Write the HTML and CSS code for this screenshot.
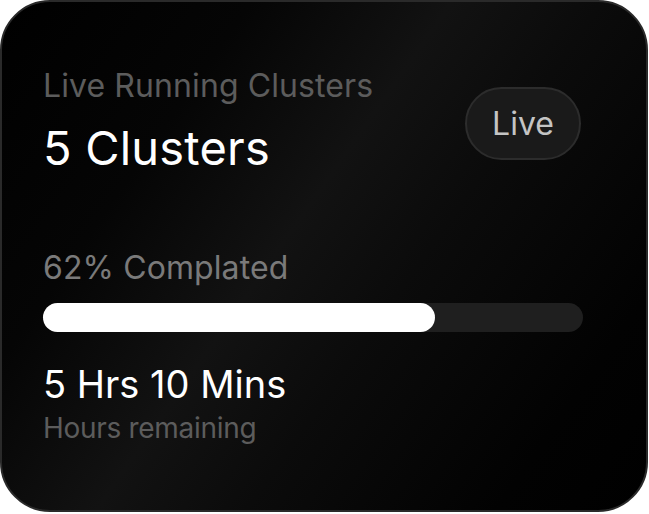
FILE: index.html
```html
<!DOCTYPE html>
<html>
<head>
<meta charset="utf-8">
<link rel="stylesheet" href="styles.css">
</head>
<body>
<div class="card">
  <div class="header">
    <div class="titles">
      <div class="label">Live Running Clusters</div>
      <div class="big">5 Clusters</div>
    </div>
    <div class="pill">Live</div>
  </div>
  <div class="progress">
    <div class="label pct">62% Complated</div>
    <div class="track"><div class="fill" style="width:72.6%"></div></div>
  </div>
  <div class="remaining">
    <div class="time">5 Hrs 10 Mins</div>
    <div class="sub">Hours remaining</div>
  </div>
</div>
</body>
</html>
```
FILE: styles.css
```css
* { box-sizing: border-box; }
html, body { margin: 0; padding: 0; background: #fff; }
body { font-family: Inter, "Noto Sans", sans-serif; }
.card {
  width: 648px;
  height: 512px;
  border: 2px solid #2a2a2a;
  border-radius: 50px;
  background: linear-gradient(125deg, #000 0%, #050505 25%, #121212 45%, #0b0b0b 60%, #020202 85%, #000 100%);
  padding: 64px 63px 0 41px;
  display: flex;
  flex-direction: column;
}
.header { display: flex; justify-content: space-between; align-items: flex-start; }
.label { color: #5c5c5c; font-size: 32px; line-height: 40px; letter-spacing: 0.1px; }
.big { color: #fff; font-size: 47px; line-height: 56px; margin-top: 14px; letter-spacing: 0.2px; }
.pill {
  margin-top: 21px;
  margin-right: 2px;
  width: 116px; height: 73px;
  border-radius: 37px;
  border: 2px solid #2c2c2c;
  background: #1a1a1a;
  color: #c4c4c4;
  font-size: 32px;
  display: flex; align-items: center; justify-content: center;
}
.progress { margin-top: 72px; }
.pct { color: #7a7a7a; }
.track { margin-top: 15px; height: 29px; border-radius: 15px; background: #1f1f1f; }
.fill { height: 100%; border-radius: 15px; background: #fff; }
.remaining { margin-top: 30px; }
.time { color: #fff; font-size: 38px; line-height: 44px; }
.sub { color: #5c5c5c; font-size: 28px; line-height: 34px; margin-top: 5px; letter-spacing: -0.3px; }
```
